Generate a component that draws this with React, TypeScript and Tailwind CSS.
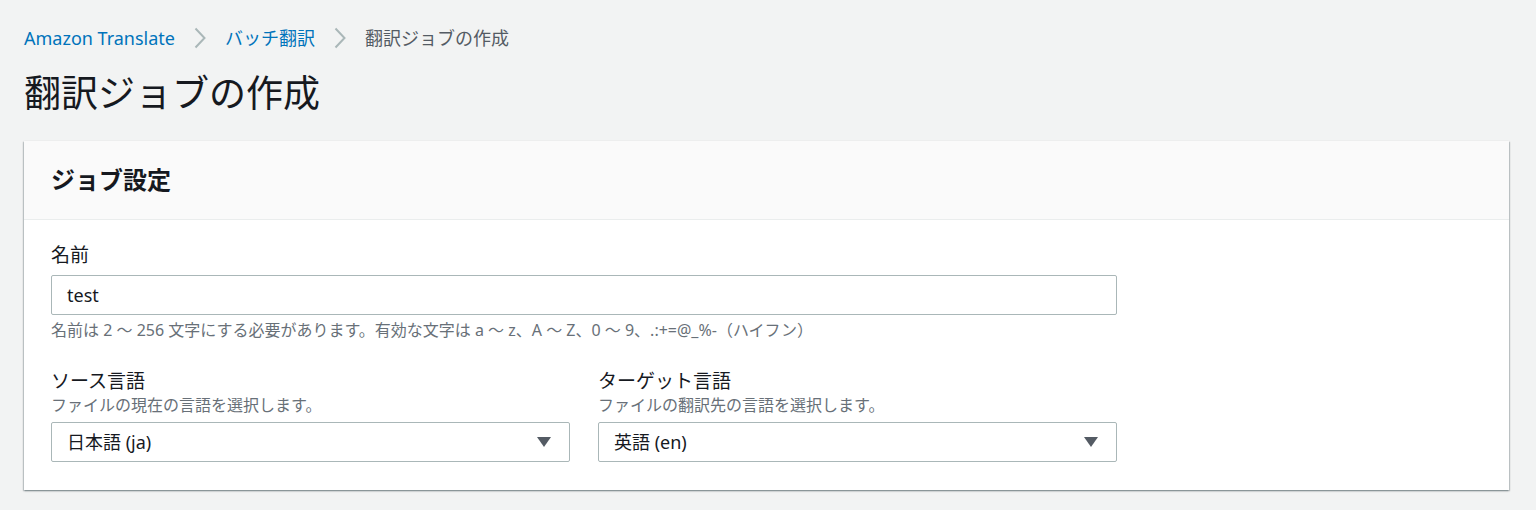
const font = { fontFamily: '"Noto Sans", "Noto Sans CJK JP", sans-serif' };

function Crumb() {
  return (
    <svg width="12" height="22" viewBox="0 0 12 22" className="mx-[19px] shrink-0">
      <path d="M1.5 1.5 L10.5 11 L1.5 20.5" fill="none" stroke="#aab7b8" strokeWidth="2" />
    </svg>
  );
}

function Field({ label, desc, value }: { label: string; desc: string; value: string }) {
  return (
    <div className="flex flex-col">
      <div className="text-[19px] leading-[26px] text-[#16191f]">{label}</div>
      <div className="text-[16px] leading-[22px] text-[#687078]">{desc}</div>
      <div className="mt-[6px] h-[40px] border border-[#aab7b8] rounded-[2px] bg-white flex items-center justify-between pl-[15px] pr-[18px]">
        <span className="text-[18px] text-[#16191f]">{value}</span>
        <svg width="14" height="10" viewBox="0 0 14 10">
          <path d="M0 0 H14 L7 10 Z" fill="#545b64" />
        </svg>
      </div>
    </div>
  );
}

export default function App() {
  return (
    <div style={font} className="w-[1536px] h-[510px] bg-[#f2f3f3] px-[24px] pt-[26px] overflow-hidden antialiased">
      {/* Breadcrumb */}
      <div className="flex items-center h-[24px] text-[18px]">
        <span className="text-[#0073bb]">Amazon Translate</span>
        <Crumb />
        <span className="text-[#0073bb]">バッチ翻訳</span>
        <Crumb />
        <span className="text-[#545b64]">翻訳ジョブの作成</span>
      </div>

      <h1 className="mt-[20px] text-[37px] leading-[46px] font-normal text-[#16191f]">翻訳ジョブの作成</h1>

      {/* Panel */}
      <div className="mt-[25px] w-[1485px] bg-white shadow-[0_1px_2px_rgba(0,28,36,0.3),1px_1px_1px_rgba(0,28,36,0.15),-1px_1px_1px_rgba(0,28,36,0.15)]">
        <div className="h-[79px] bg-[#fafafa] border-b border-[#eaeded] flex items-center px-[27px]">
          <h2 className="text-[24px] font-bold text-[#16191f]">ジョブ設定</h2>
        </div>
        <div className="px-[27px] pt-[22px] pb-[28px]">
          <div className="w-[1066px]">
            <div className="text-[19px] leading-[26px] text-[#16191f]">名前</div>
            <div className="mt-[7px] h-[40px] border border-[#aab7b8] rounded-[2px] flex items-center pl-[15px] text-[18px] text-[#16191f]">
              test
            </div>
            <div className="mt-[4px] text-[16px] leading-[22px] text-[#687078]">
              名前は 2 〜 256 文字にする必要があります。有効な文字は a 〜 z、A 〜 Z、0 〜 9、.:+=@_%-（ハイフン）
            </div>
            <div className="mt-[27px] grid grid-cols-2 gap-[28px]">
              <Field label="ソース言語" desc="ファイルの現在の言語を選択します。" value="日本語 (ja)" />
              <Field label="ターゲット言語" desc="ファイルの翻訳先の言語を選択します。" value="英語 (en)" />
            </div>
          </div>
        </div>
      </div>
    </div>
  );
}
